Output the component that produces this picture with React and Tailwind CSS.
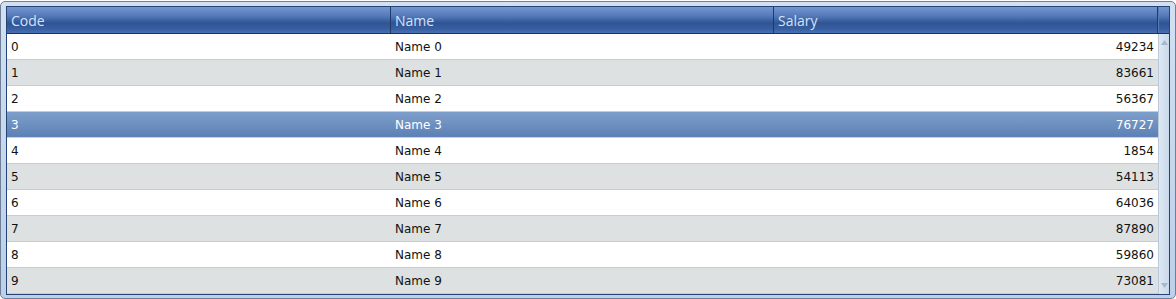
const rows = [
  [0, 49234],
  [1, 83661],
  [2, 56367],
  [3, 76727],
  [4, 1854],
  [5, 54113],
  [6, 64036],
  [7, 87890],
  [8, 59860],
  [9, 73081],
];

const selected = 3;

function HeaderCell({ label, w, last }) {
  return (
    <div
      className={`${w} h-full flex items-center pl-[4px] text-[14px] text-[#d4e3fb] ${
        last ? "" : "border-r border-[#1d3a68]"
      }`}
    >
      {label}
    </div>
  );
}

export default function App() {
  return (
    <div className="w-[1176px] h-[299px] bg-white pt-[1px]" style={{ fontFamily: "Tahoma, 'DejaVu Sans', sans-serif" }}>
      <div className="w-[1176px] h-[298px] rounded-[5px] border border-[#6e7f96] bg-[linear-gradient(to_bottom,#d2e0f1,#bcd0ea)] px-[5px] pt-[4px] pb-[3px]">
        <div className="h-full border border-[#234474] flex flex-col bg-white">
          <div className="h-[27px] flex border-b border-[#163462] bg-[linear-gradient(to_bottom,#7596cf_0%,#5479b8_35%,#2f5494_62%,#3860a2_85%,#4a70b0_100%)]" style={{ fontFamily: "'Open Sans', sans-serif" }}>
            <HeaderCell label="Code" w="w-[384px]" />
            <HeaderCell label="Name" w="w-[383px]" />
            <HeaderCell label="Salary" w="w-[384px]" />
            <div className="flex-1 border-l border-[#5a7cb6]" />
          </div>
          <div className="flex-1 flex">
            <div className="w-[1151px] flex flex-col">
              {rows.map(([code, salary], i) => {
                const sel = i === selected;
                const bg = sel
                  ? "bg-[linear-gradient(to_bottom,#7e9fcb,#5d80b5)] text-white border-[#c6d2e2]"
                  : i % 2 === 0
                  ? "bg-white text-[#111] border-[#c8ccd0]"
                  : "bg-[#dde1e1] text-[#111] border-[#c8ccd0]";
                return (
                  <div key={i} className={`h-[26px] flex items-center border-b text-[12px] ${bg}`}>
                    <div className="w-[384px] pl-[4px]">{code}</div>
                    <div className="w-[383px] pl-[4px]">Name {code}</div>
                    <div className="w-[384px] pr-[4px] text-right">{salary}</div>
                  </div>
                );
              })}
            </div>
            <div className="flex-1 flex flex-col items-center justify-between py-[6px] bg-[linear-gradient(to_right,#dfe8f3,#c9d8ea)] border-l border-[#b9c9dc]">
              <svg width="7" height="5" viewBox="0 0 7 5">
                <path d="M3.5 0 L7 5 L0 5 Z" fill="#a8b8cc" />
              </svg>
              <svg width="7" height="5" viewBox="0 0 7 5">
                <path d="M0 0 L7 0 L3.5 5 Z" fill="#a8b8cc" />
              </svg>
            </div>
          </div>
        </div>
      </div>
    </div>
  );
}
